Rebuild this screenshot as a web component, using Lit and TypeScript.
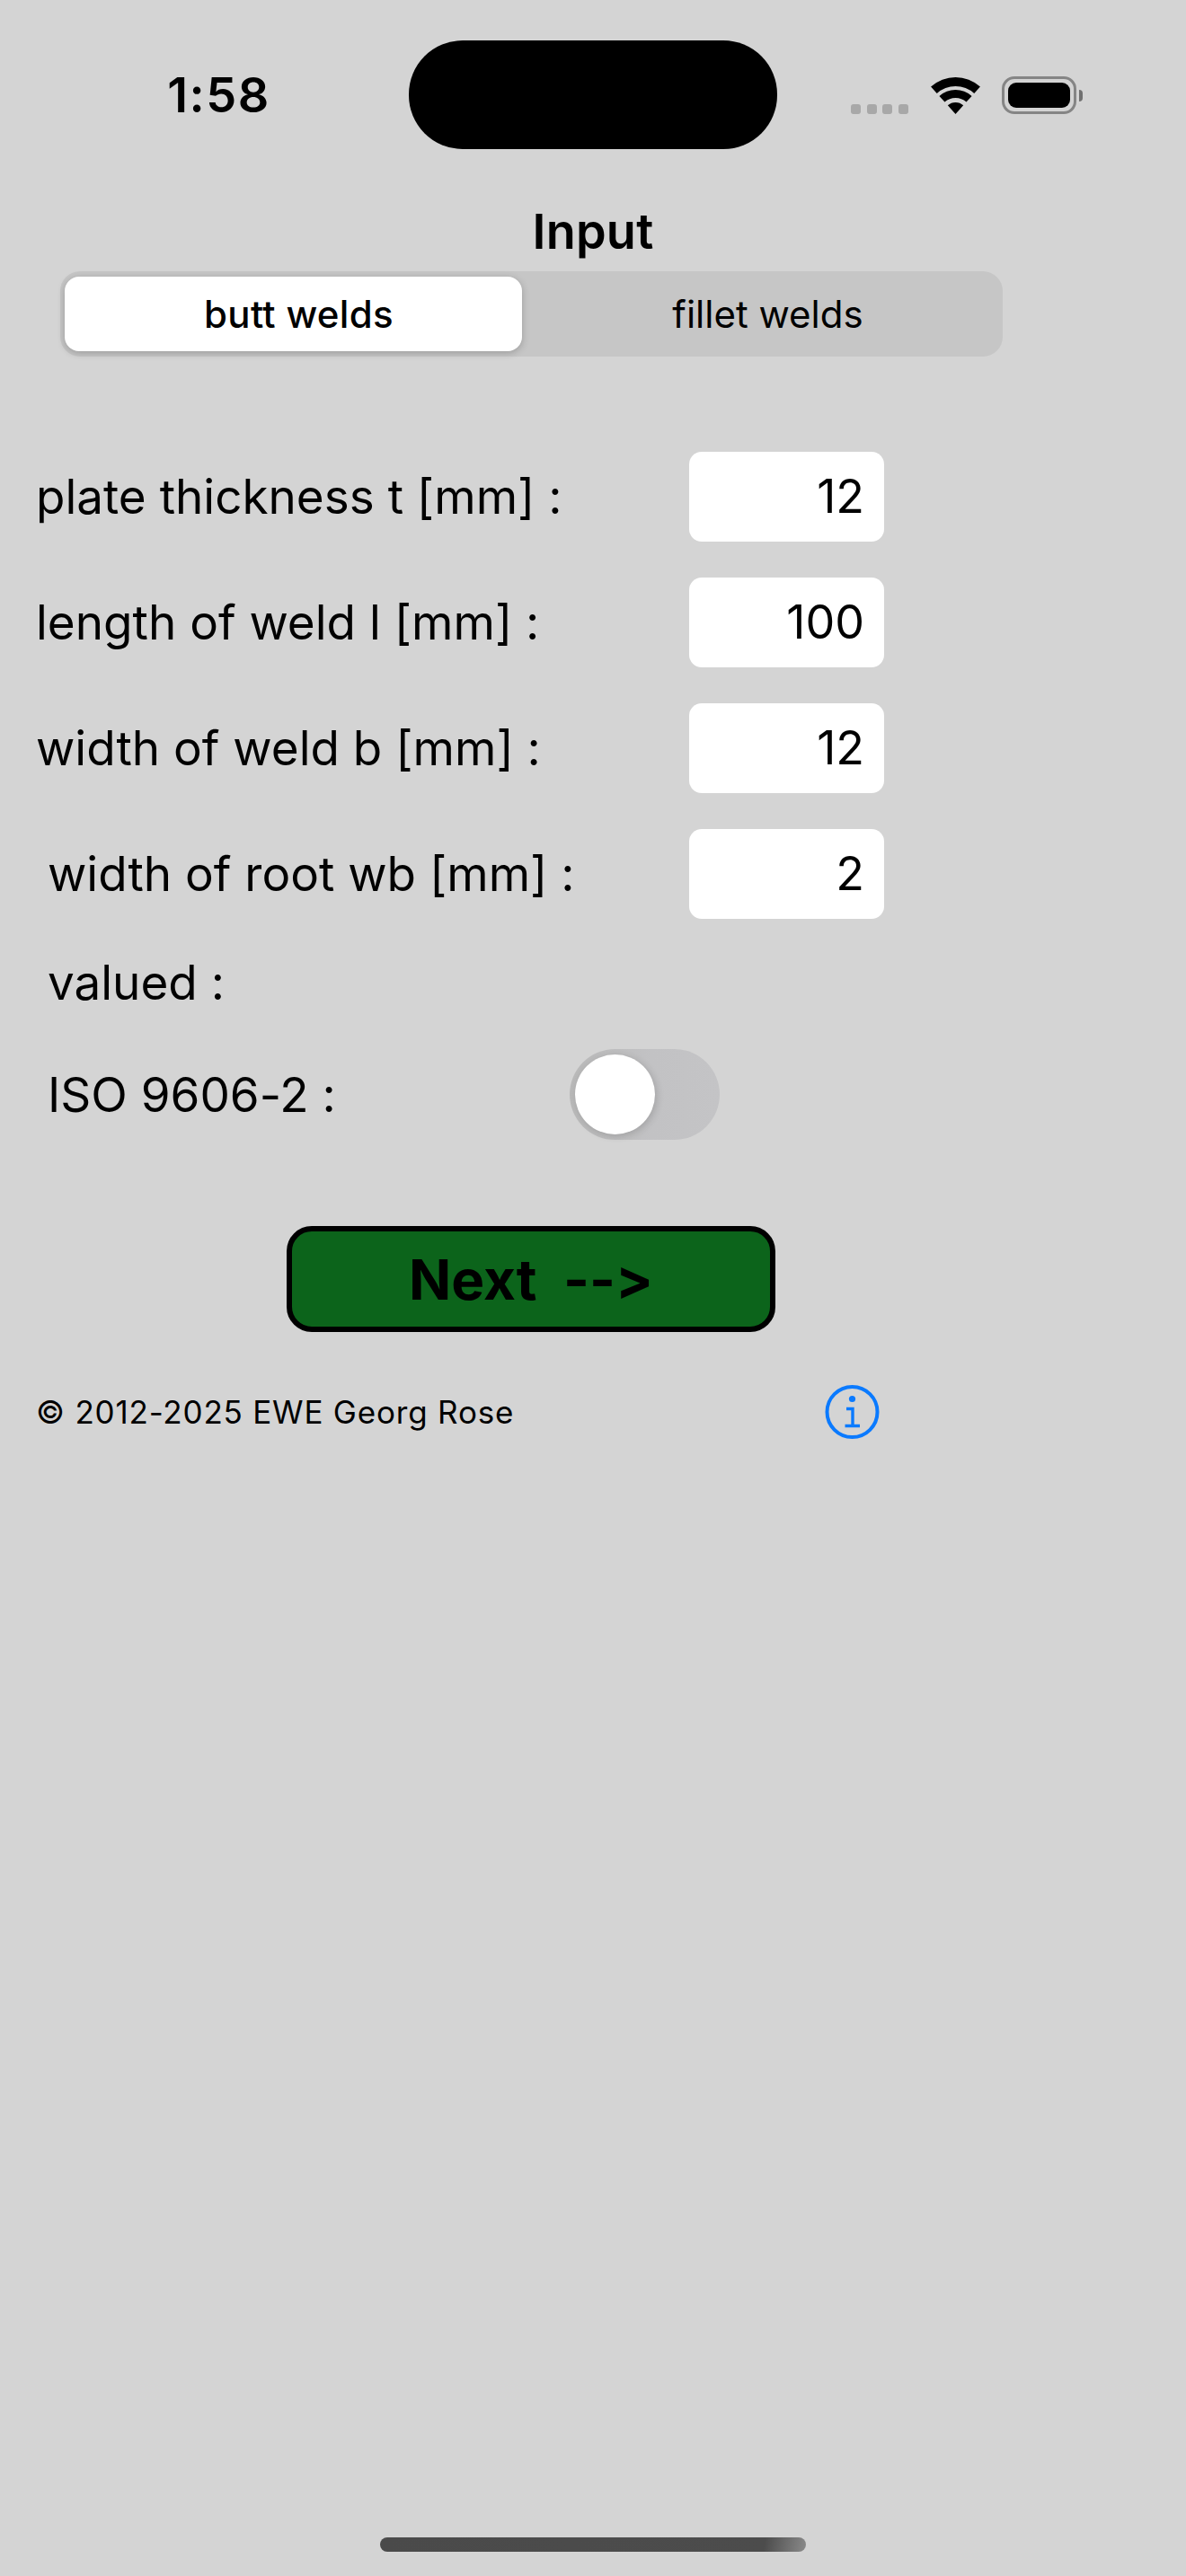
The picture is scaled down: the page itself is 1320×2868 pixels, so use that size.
import { LitElement, html, css, svg } from "lit";
import { customElement, state } from "lit/decorators.js";

const FIELDS = [
  { label: "plate thickness t [mm] :", value: "12", indented: false },
  { label: "length of weld l [mm] :", value: "100", indented: false },
  { label: "width of weld b [mm] :", value: "12", indented: false },
  { label: "width of root wb [mm] :", value: "2", indented: true },
];

// one ring of the wifi glyph, cx/cy is the apex of the fan
function wifiBand(outer: number, inner: number) {
  const cx = 27.5;
  const cy = 41;
  const a = (42 * Math.PI) / 180;
  const s = Math.sin(a);
  const c = Math.cos(a);
  const p = (r: number, dir: number) => `${cx + dir * r * s} ${cy - r * c}`;
  if (inner === 0) {
    return `M${cx} ${cy}L${p(outer, -1)}A${outer} ${outer} 0 0 1 ${p(outer, 1)}Z`;
  }
  return `M${p(inner, -1)}L${p(outer, -1)}A${outer} ${outer} 0 0 1 ${p(outer, 1)}L${p(inner, 1)}A${inner} ${inner} 0 0 0 ${p(inner, -1)}Z`;
}

@customElement("app-root")
export class AppRoot extends LitElement {
  @state() private mode: "butt" | "fillet" = "butt";

  static styles = css`
    :host {
      display: block;
      font-family: Inter, "Liberation Sans", sans-serif;
      /* Inter would otherwise turn --> into an arrow glyph */
      font-feature-settings: "calt" 0, "liga" 0;
      color: #000;
    }

    .page {
      width: 1320px;
      height: 2868px;
      background: #d4d4d4;
      display: flex;
      flex-direction: column;
      overflow: hidden;
    }

    .status {
      display: flex;
      align-items: flex-start;
      height: 166px;
      padding-top: 45px;
      box-sizing: border-box;
    }

    .time {
      width: 455px;
      box-sizing: border-box;
      padding-left: 32px;
      margin-top: 29px;
      text-align: center;
      font-size: 54px;
      line-height: 64px;
      font-weight: 600;
      letter-spacing: 1.5px;
    }

    .island {
      width: 410px;
      height: 121px;
      border-radius: 60px;
      background: #000;
    }

    .indicators {
      display: flex;
      align-items: flex-end;
      height: 42px;
      margin: 40px 0 0 82px;
    }

    .dots {
      display: flex;
      gap: 6.5px;
    }

    .dots span {
      width: 11px;
      height: 11px;
      border-radius: 3px;
      background: #a8a8a8;
    }

    .wifi {
      display: block;
      width: 55px;
      height: 41px;
      margin-left: 25px;
    }

    .battery {
      width: 83px;
      height: 42px;
      box-sizing: border-box;
      margin-left: 24px;
      padding: 4px;
      border: 3px solid #858585;
      border-radius: 14px;
    }

    .battery div {
      height: 100%;
      border-radius: 9px;
      background: #000;
    }

    .nub {
      width: 4px;
      height: 13px;
      margin: 0 0 14px 3px;
      border-radius: 0 7px 7px 0;
      background: #707070;
    }

    .title {
      margin-top: 62px;
      height: 74px;
      text-align: center;
      font-size: 54px;
      line-height: 60px;
      font-weight: 600;
      letter-spacing: 0.2px;
    }

    .segments {
      display: flex;
      box-sizing: border-box;
      width: 1049px;
      height: 95px;
      margin-left: 67px;
      padding: 6px 0 6px 5px;
      border-radius: 22px;
      background: #c6c6c6;
    }

    .segment {
      box-sizing: border-box;
      padding-left: 18px;
      display: flex;
      align-items: center;
      justify-content: center;
      font-size: 42px;
      border: 0;
      border-radius: 16px;
      background: none;
      color: inherit;
      font-family: inherit;
      font-feature-settings: inherit;
    }

    .segment.butt {
      width: 509px;
    }

    .segment.fillet {
      width: 535px;
    }

    .segment.on {
      background: #fff;
      font-weight: 500;
      letter-spacing: 0.3px;
      box-shadow: 0 2px 8px rgba(0, 0, 0, 0.22);
    }

    .fields {
      display: flex;
      flex-direction: column;
      gap: 40px;
      margin-top: 106px;
    }

    .field {
      display: flex;
      align-items: center;
      justify-content: space-between;
      box-sizing: border-box;
      width: 984px;
      padding-left: 40px;
    }

    .label {
      font-size: 53px;
      line-height: 64px;
      white-space: pre;
    }

    .field.indented,
    .plain {
      padding-left: 53px;
    }

    .value {
      box-sizing: border-box;
      width: 217px;
      height: 100px;
      padding-right: 22px;
      border-radius: 14px;
      background: #fff;
      text-align: right;
      font-size: 52px;
      line-height: 100px;
    }

    .plain {
      margin-top: 39px;
    }

    .iso {
      display: flex;
      align-items: center;
      justify-content: space-between;
      box-sizing: border-box;
      width: 801px;
      margin-top: 42px;
      padding-left: 53px;
    }

    .toggle {
      box-sizing: border-box;
      width: 167px;
      height: 101px;
      padding: 6px;
      border-radius: 51px;
      background: linear-gradient(90deg, #b9b9b9 0%, #c2c2c4 55%, #c4c4c6 100%);
    }

    .knob {
      width: 89px;
      height: 89px;
      border-radius: 50%;
      background: #fff;
      box-shadow: 2px 2px 8px rgba(0, 0, 0, 0.16);
    }

    .next {
      display: block;
      box-sizing: border-box;
      width: 544px;
      height: 118px;
      margin: 96px 0 0 319px;
      border: 6px solid #000;
      border-radius: 28px;
      background: #0c641b;
      color: #000;
      font-family: inherit;
      font-feature-settings: inherit;
      font-size: 62px;
      font-weight: 700;
      white-space: pre;
    }

    .footer {
      display: flex;
      align-items: center;
      justify-content: space-between;
      box-sizing: border-box;
      width: 979px;
      margin-top: 59px;
      padding-left: 40px;
    }

    .copy {
      font-size: 35px;
      letter-spacing: 0.8px;
    }

    .info {
      display: block;
      width: 61px;
      height: 60px;
      color: #0a7aff;
    }

    .spacer {
      flex: 1;
    }

    .home {
      width: 474px;
      height: 16px;
      margin: 0 0 27px 423px;
      border-radius: 8px;
      background: linear-gradient(100deg, #4a4a4a 0%, #4c4c4c 90%, #8a8a8a 100%);
    }
  `;

  render() {
    return html`
      <div class="page">
        <div class="status">
          <div class="time">1:58</div>
          <div class="island"></div>
          <div class="indicators">
            <div class="dots"><span></span><span></span><span></span><span></span></div>
            <svg class="wifi" viewBox="0 0 55 41">
              ${[[41, 31], [27, 18], [13, 0]].map(([o, i]) => svg`<path d=${wifiBand(o, i)} fill="#000"></path>`)}
            </svg>
            <div class="battery"><div></div></div>
            <div class="nub"></div>
          </div>
        </div>

        <div class="title">Input</div>
        <div class="segments">
          <button class="segment butt ${this.mode === "butt" ? "on" : ""}" @click=${() => (this.mode = "butt")}>butt welds</button>
          <button class="segment fillet ${this.mode === "fillet" ? "on" : ""}" @click=${() => (this.mode = "fillet")}>fillet welds</button>
        </div>

        <div class="fields">
          ${FIELDS.map(
            (f) => html`
              <div class="field ${f.indented ? "indented" : ""}">
                <span class="label">${f.label}</span>
                <div class="value">${f.value}</div>
              </div>
            `
          )}
        </div>

        <div class="label plain">valued :</div>
        <div class="iso">
          <span class="label">ISO 9606-2 :</span>
          <div class="toggle"><div class="knob"></div></div>
        </div>

        <button class="next">Next  --&gt;</button>

        <div class="footer">
          <span class="copy">© 2012-2025 EWE Georg Rose</span>
          <svg class="info" viewBox="0 0 61 60" fill="none" stroke="currentColor">
            <circle cx="30.5" cy="30" r="28" stroke-width="4"></circle>
            <circle cx="30.5" cy="15.5" r="3.6" fill="currentColor" stroke="none"></circle>
            <path d="M24 26.5h7V45M22.5 45.5h16.5" stroke-width="3.4"></path>
          </svg>
        </div>

        <div class="spacer"></div>
        <div class="home"></div>
      </div>
    `;
  }
}
